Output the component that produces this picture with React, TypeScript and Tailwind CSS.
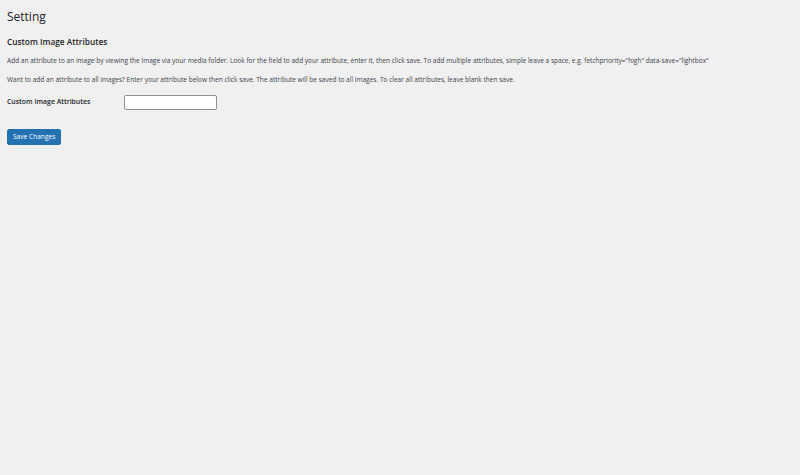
import React from 'react';

const font = { fontFamily: '"Open Sans", "Noto Sans", sans-serif' };

export default function App() {
  return (
    <div className="min-h-[475px] w-full bg-[#f0f0f1] px-[7px] pt-[7px] text-[#3c434a]" style={font}>
      <h1 className="text-[12px] leading-[20px] font-normal text-[#1d2327]">Setting</h1>

      <h2 className="mt-[8px] text-[8.3px] leading-[14px] font-semibold text-[#1d2327]">Custom Image Attributes</h2>

      <p className="mt-[6px] text-[6.55px] leading-[12px]">
        Add an attribute to an image by viewing the image via your media folder. Look for the field to add your attribute, enter it, then click save. To add multiple attributes, simple leave a space, e.g. fetchpriority="high" data-save="lightbox"
      </p>
      <p className="mt-[7px] text-[6.55px] leading-[12px]">
        Want to add an attribute to all images? Enter your attribute below then click save. The attribute will be saved to all images. To clear all attributes, leave blank then save.
      </p>

      <div className="mt-[9px] flex items-center">
        <label className="w-[117px] text-[6.9px] font-semibold text-[#1d2327]">Custom Image Attributes</label>
        <input
          type="text"
          className="h-[15px] w-[93px] rounded-[2px] border border-[#8c8f94] bg-white px-1 text-[7px] outline-none"
        />
      </div>

      <div className="mt-[11px]">
        <button className="h-[16px] rounded-[2px] border border-[#2271b1] bg-[#2271b1] px-[5px] text-[6.6px] leading-[14px] text-white">
          Save Changes
        </button>
      </div>
    </div>
  );
}
